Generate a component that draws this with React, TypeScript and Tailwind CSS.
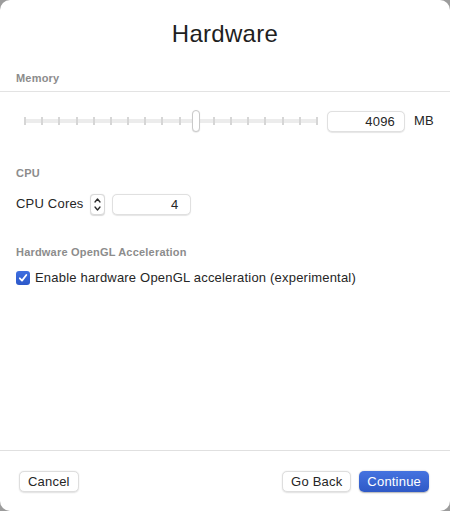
import { useState } from "react";

const TICKS = Array.from({ length: 18 }, (_, i) => i);

function SectionLabel({ children }: { children: React.ReactNode }) {
  return (
    <p className="text-[11px] leading-[14px] font-semibold tracking-[0.2px] text-[#8c8c8c] px-4">
      {children}
    </p>
  );
}

function Stepper() {
  return (
    <div className="w-[15px] h-[21px] rounded-[4px] bg-white border border-[#d9d9d9] shadow-[0_0.5px_1px_rgba(0,0,0,0.15)] flex flex-col items-center justify-center">
      <svg width="9" height="17" viewBox="0 0 9 17" fill="none">
        <path d="M2 6 L4.5 3 L7 6" stroke="#2a2a2a" strokeWidth="1.3" strokeLinecap="round" strokeLinejoin="round" />
        <path d="M2 11 L4.5 14 L7 11" stroke="#2a2a2a" strokeWidth="1.3" strokeLinecap="round" strokeLinejoin="round" />
      </svg>
    </div>
  );
}

function Button({ label, primary = false, className = "" }: { label: string; primary?: boolean; className?: string }) {
  return (
    <button
      className={
        (primary
          ? "h-[21px] px-[8px] rounded-[5px] text-[13px] leading-[20px] tracking-[0.2px] text-white bg-gradient-to-b from-[#4573e0] to-[#2f59c6] shadow-[0_0.5px_1.5px_rgba(0,0,0,0.3)]"
          : "h-[21px] px-[8px] rounded-[5px] text-[13px] leading-[18px] tracking-[0.2px] text-[#262626] bg-white border border-[#dedede] shadow-[0_0.5px_1.5px_rgba(0,0,0,0.12)]") +
        " " +
        className
      }
    >
      {label}
    </button>
  );
}

export default function App() {
  const [memory] = useState(4096);
  const [cores] = useState(4);
  const [gl, setGl] = useState(true);

  return (
    <div className="w-[450px] h-[511px] bg-[#9c9c9c]">
      <div
        className="w-full h-full bg-white rounded-[10px] flex flex-col text-[#262626] tracking-[0.2px]"
        style={{ fontFamily: '"Liberation Sans", Arial, sans-serif' }}
      >
        <h1 className="pt-[20px] text-center text-[24px] leading-[28px] tracking-[0.3px] text-[#1f1f1f]">
          Hardware
        </h1>

        <div className="mt-[23px]">
          <SectionLabel>Memory</SectionLabel>
        </div>
        <div className="mt-[6px] h-px bg-[#e3e3e3]" />

        <div className="mt-[18px] flex items-center pl-[24px]">
          <div className="relative w-[294px] h-[22px] flex items-center">
            <div className="absolute left-0 right-0 top-[9px] h-[4px] rounded-full bg-[#ececec]" />
            <div className="relative w-full flex justify-between items-center">
              {TICKS.map((t) => (
                <div key={t} className="w-[2px] h-[8px] bg-[#d6d6d6]" />
              ))}
            </div>
            <div className="absolute left-[168px] top-0 w-[8px] h-[22px] rounded-full bg-white border border-[#c9c9c9] shadow-[0_0.5px_1px_rgba(0,0,0,0.15)]" />
          </div>
          <div className="ml-[9px] w-[78px] h-[21px] rounded-[5px] bg-white border border-[#e0e0e0] shadow-[0_0.5px_1px_rgba(0,0,0,0.1)] text-right pr-[9px] text-[13px] leading-[19px]">
            {memory}
          </div>
          <span className="ml-[9px] text-[13px]">MB</span>
        </div>

        <div className="mt-[34px]">
          <SectionLabel>CPU</SectionLabel>
        </div>
        <div className="mt-[13px] flex items-center px-4">
          <span className="text-[13px] leading-[22px]">CPU Cores</span>
          <div className="ml-[6px]">
            <Stepper />
          </div>
          <div className="ml-[7px] w-[79px] h-[21px] rounded-[5px] bg-white border border-[#e0e0e0] shadow-[0_0.5px_1px_rgba(0,0,0,0.1)] text-right pr-[11px] text-[13px] leading-[19px]">
            {cores}
          </div>
        </div>

        <div className="mt-[30px]">
          <SectionLabel>Hardware OpenGL Acceleration</SectionLabel>
        </div>
        <label className="mt-[11px] flex items-center gap-[5px] px-4">
          <button
            onClick={() => setGl(!gl)}
            className="w-[14px] h-[14px] rounded-[3px] bg-gradient-to-b from-[#3f6fe0] to-[#2c58c9] flex items-center justify-center"
          >
            {gl && (
              <svg width="10" height="10" viewBox="0 0 10 10" fill="none">
                <path d="M1.8 5.3 L4 7.6 L8.3 2" stroke="white" strokeWidth="1.8" strokeLinecap="round" strokeLinejoin="round" />
              </svg>
            )}
          </button>
          <span className="text-[13px] leading-[16px]">
            Enable hardware OpenGL acceleration (experimental)
          </span>
        </label>

        <div className="flex-1" />

        <div className="h-[61px] border-t border-[#e0e0e0] flex items-start pt-[20px] pl-[19px] pr-[21px]">
          <Button label="Cancel" />
          <div className="flex-1" />
          <div className="flex gap-[8px]">
            <Button label="Go Back" className="px-[7px]" />
            <Button label="Continue" primary />
          </div>
        </div>
      </div>
    </div>
  );
}
